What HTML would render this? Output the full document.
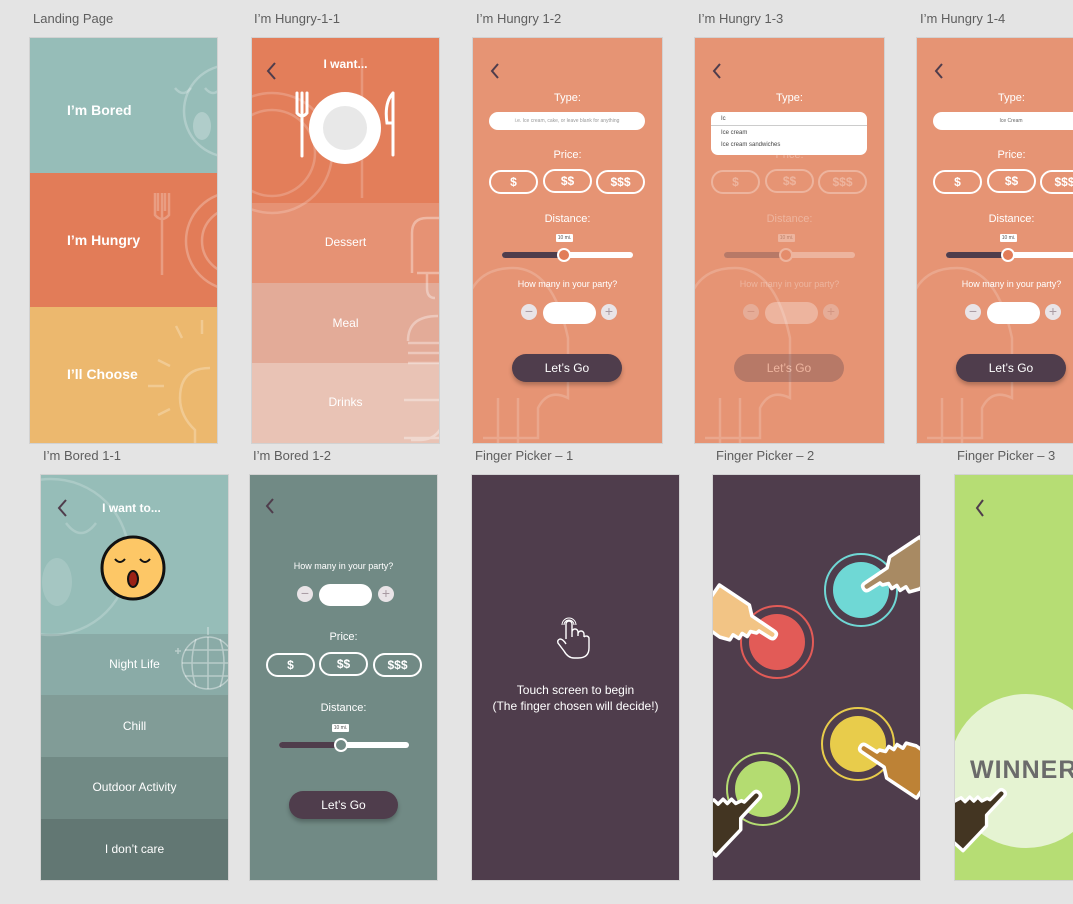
<!DOCTYPE html>
<html><head><meta charset="utf-8">
<style>
*{margin:0;padding:0;box-sizing:border-box}
body{width:1073px;height:904px;background:#e4e4e4;position:relative;overflow:hidden;font-family:"Liberation Sans",sans-serif}
.lbl{position:absolute;font-size:13px;color:#5e5e5e;white-space:nowrap}
.fr{position:absolute;overflow:hidden;outline:1px solid #d2d2d2}
.a{position:absolute}
.c{position:absolute;left:0;width:100%;text-align:center;color:#fff;white-space:nowrap}
.big{font-weight:bold;font-size:14px;color:#fff;position:absolute;white-space:nowrap}
.pill{position:absolute;border:2px solid #fff;border-radius:12px;color:#fff;font-weight:bold;font-size:12px;text-align:center;line-height:20px}
.wh{position:absolute;background:#fff;border-radius:11px}
.circ{position:absolute;width:16px;height:16px;border-radius:50%;background:#e9e4e7;color:#a89aa2;font-size:14px;line-height:15px;text-align:center}
.go{position:absolute;background:#4f3d4c;border-radius:14px;color:#fff;font-size:12px;text-align:center;line-height:28px;box-shadow:0 3px 4px rgba(0,0,0,.25)}
.tip{position:absolute;background:#fff;font-size:5px;color:#555;text-align:center;line-height:8px;border-radius:1px}
</style></head><body>

<div class="lbl" style="left:33px;top:11px">Landing Page</div>
<div class="lbl" style="left:254px;top:11px">I’m Hungry-1-1</div>
<div class="lbl" style="left:476px;top:11px">I’m Hungry 1-2</div>
<div class="lbl" style="left:698px;top:11px">I’m Hungry 1-3</div>
<div class="lbl" style="left:920px;top:11px">I’m Hungry 1-4</div>
<div class="lbl" style="left:43px;top:448px">I’m Bored 1-1</div>
<div class="lbl" style="left:253px;top:448px">I’m Bored 1-2</div>
<div class="lbl" style="left:475px;top:448px">Finger Picker – 1</div>
<div class="lbl" style="left:716px;top:448px">Finger Picker – 2</div>
<div class="lbl" style="left:957px;top:448px">Finger Picker – 3</div>

<!-- Landing -->
<div class="fr" style="left:30px;top:38px;width:187px;height:405px">
 <div class="a" style="left:0;top:0;width:187px;height:135px;background:#96bdb8"></div>
 <div class="a" style="left:0;top:135px;width:187px;height:134px;background:#e27c58"></div>
 <div class="a" style="left:0;top:269px;width:187px;height:136px;background:#ecb86e"></div>
 <svg class="a" style="left:0;top:0" width="187" height="405" fill="none" stroke="#fff" stroke-width="2.5" stroke-opacity=".25">
  <circle cx="200" cy="73" r="46"/><path d="M145 50q8 10 16 0M175 50q8 10 16 0"/><ellipse cx="172" cy="88" rx="9" ry="14" fill="#fff" fill-opacity=".25" stroke="none"/>
  <path d="M132 155v82M125 155v22q7 8 14 0v-22M128 155v18M135 155v18"/><circle cx="205" cy="203" r="49"/><circle cx="205" cy="203" r="33"/>
  <path d="M172 282v14M146 288l6 12M128 322l12 6M118 348h16M128 377l12-6"/><path d="M180 330q-30 0-30 30q0 18 15 32v18h30"/><path d="M157 412h40M160 422h40M162 432h40" />
 </svg>
 <div class="big" style="left:37px;top:64px">I’m Bored</div>
 <div class="big" style="left:37px;top:194px">I’m Hungry</div>
 <div class="big" style="left:37px;top:328px">I’ll Choose</div>
</div>

<!-- Hungry 1-1 -->
<div class="fr" style="left:252px;top:38px;width:187px;height:405px">
 <div class="a" style="left:0;top:0;width:187px;height:165px;background:#e37e5a"></div>
 <div class="a" style="left:0;top:165px;width:187px;height:80px;background:#e69274"></div>
 <div class="a" style="left:0;top:245px;width:187px;height:80px;background:#e3ab98"></div>
 <div class="a" style="left:0;top:325px;width:187px;height:80px;background:#e9c3b5"></div>
 <svg class="a" style="left:0;top:0" width="187" height="405" fill="none">
  <g stroke="#fff" stroke-opacity=".2" stroke-width="2.5"><circle cx="20" cy="115" r="60"/><circle cx="20" cy="115" r="43"/><path d="M110 20v140"/></g>
  <path d="M23 25l-7 8 7 8" stroke="#4f3d4c" stroke-width="2"/>
  <g stroke="#fff" stroke-width="3" stroke-linecap="round"><path d="M50 58v60M45 55v20q5 6 10 0v-20M50 55v18"/><path d="M141 55v62M141 55q-9 10-6 30h6"/></g>
  <circle cx="93" cy="90" r="36" fill="#fff"/><circle cx="93" cy="90" r="22" fill="#e8e8e8"/>
  <g stroke="#fff" stroke-opacity=".35" stroke-width="2.5"><path d="M160 235v-40q0-15 15-15h15M165 235h30M175 235v15q0 10 8 10"/><path d="M156 303q0-25 30-25M156 305h35M156 315h35M156 325h35"/><path d="M152 362h40v20q-5 20-25 20h-8M152 400h40"/></g>
 </svg>
 <div class="c" style="top:19px;font-size:12px;font-weight:bold">I want...</div>
 <div class="c" style="top:197px;font-size:12px">Dessert</div>
 <div class="c" style="top:278px;font-size:12px">Meal</div>
 <div class="c" style="top:357px;font-size:12px">Drinks</div>
</div>

<!-- Hungry 1-2 -->
<div class="fr" style="left:473px;top:38px;width:189px;height:405px;background:#e69474">
 <svg class="a" style="left:0;top:0" width="189" height="405" fill="none" stroke="#fff" stroke-opacity=".18" stroke-width="2.5"><path d="M-5 260q10-30 45-30q40 0 55 70v60q-20-10-30 10v30h-55M25 360v60h20v-60"/></svg>
 <svg class="a" style="left:16px;top:24px" width="12" height="18" fill="none"><path d="M9 2L3 9l6 7" stroke="#4f3d4c" stroke-width="2"/></svg>
 <div class="c" style="top:54px;font-size:11px">Type:</div>
 <div class="wh" style="left:16px;top:74px;width:156px;height:18px;border-radius:9px;font-size:5px;color:#999;text-align:center;line-height:18px">i.e. Ice cream, cake, or leave blank for anything</div>
 <div class="c" style="top:111px;font-size:11px">Price:</div>
 <div class="pill" style="left:16px;top:132px;width:49px;height:24px">$</div>
 <div class="pill" style="left:70px;top:131px;width:49px;height:24px">$$</div>
 <div class="pill" style="left:123px;top:132px;width:49px;height:24px">$$$</div>
 <div class="c" style="top:175px;font-size:11px">Distance:</div>
 <div class="tip" style="left:83px;top:196px;width:17px;height:8px">10 mi.</div>
 <div class="a" style="left:29px;top:214px;width:131px;height:6px;background:#fff;border-radius:3px"></div>
 <div class="a" style="left:29px;top:214px;width:62px;height:6px;background:#4f3d4c;border-radius:3px"></div>
 <div class="a" style="left:84px;top:210px;width:14px;height:14px;border-radius:50%;background:#e27c58;border:2px solid #fff"></div>
 <div class="c" style="top:241px;font-size:9px">How many in your party?</div>
 <div class="circ" style="left:48px;top:266px">−</div>
 <div class="wh" style="left:70px;top:264px;width:53px;height:22px"></div>
 <div class="circ" style="left:128px;top:266px">+</div>
 <div class="go" style="left:39px;top:316px;width:110px;height:28px">Let’s Go</div>
</div>

<!-- Hungry 1-3 -->
<div class="fr" style="left:695px;top:38px;width:189px;height:405px;background:#e69474">
 <svg class="a" style="left:0;top:0" width="189" height="405" fill="none" stroke="#fff" stroke-opacity=".18" stroke-width="2.5"><path d="M-5 260q10-30 45-30q40 0 55 70v60q-20-10-30 10v30h-55M25 360v60h20v-60"/></svg>
 <svg class="a" style="left:16px;top:24px" width="12" height="18" fill="none"><path d="M9 2L3 9l6 7" stroke="#4f3d4c" stroke-width="2"/></svg>
 <div class="c" style="top:54px;font-size:11px">Type:</div>
 <div style="opacity:.3">
 <div class="c" style="top:111px;font-size:11px">Price:</div>
 <div class="pill" style="left:16px;top:132px;width:49px;height:24px">$</div>
 <div class="pill" style="left:70px;top:131px;width:49px;height:24px">$$</div>
 <div class="pill" style="left:123px;top:132px;width:49px;height:24px">$$$</div>
 <div class="c" style="top:175px;font-size:11px">Distance:</div>
 <div class="tip" style="left:83px;top:196px;width:17px;height:8px">10 mi.</div>
 <div class="a" style="left:29px;top:214px;width:131px;height:6px;background:#fff;border-radius:3px"></div>
 <div class="a" style="left:29px;top:214px;width:62px;height:6px;background:#4f3d4c;border-radius:3px"></div>
 <div class="a" style="left:84px;top:210px;width:14px;height:14px;border-radius:50%;background:#e27c58;border:2px solid #fff"></div>
 <div class="c" style="top:241px;font-size:9px">How many in your party?</div>
 <div class="circ" style="left:48px;top:266px">−</div>
 <div class="wh" style="left:70px;top:264px;width:53px;height:22px"></div>
 <div class="circ" style="left:128px;top:266px">+</div>
 <div class="go" style="left:39px;top:316px;width:110px;height:28px;box-shadow:none">Let’s Go</div>
 </div>
 <div class="a" style="left:16px;top:74px;width:156px;height:43px;background:#fff;border-radius:7px;font-size:6px;color:#444">
  <div class="a" style="left:10px;top:4px">Ic</div>
  <div class="a" style="left:0;top:13px;width:156px;height:1px;background:#ccc"></div>
  <div class="a" style="left:10px;top:18px">Ice cream</div>
  <div class="a" style="left:10px;top:30px">Ice cream sandwiches</div>
 </div>
</div>

<!-- Hungry 1-4 -->
<div class="fr" style="left:917px;top:38px;width:189px;height:405px;background:#e69474">
 <svg class="a" style="left:0;top:0" width="189" height="405" fill="none" stroke="#fff" stroke-opacity=".18" stroke-width="2.5"><path d="M-5 260q10-30 45-30q40 0 55 70v60q-20-10-30 10v30h-55M25 360v60h20v-60"/></svg>
 <svg class="a" style="left:16px;top:24px" width="12" height="18" fill="none"><path d="M9 2L3 9l6 7" stroke="#4f3d4c" stroke-width="2"/></svg>
 <div class="c" style="top:54px;font-size:11px">Type:</div>
 <div class="wh" style="left:16px;top:74px;width:156px;height:18px;border-radius:9px;font-size:5px;color:#666;text-align:center;line-height:18px">Ice Cream</div>
 <div class="c" style="top:111px;font-size:11px">Price:</div>
 <div class="pill" style="left:16px;top:132px;width:49px;height:24px">$</div>
 <div class="pill" style="left:70px;top:131px;width:49px;height:24px">$$</div>
 <div class="pill" style="left:123px;top:132px;width:49px;height:24px">$$$</div>
 <div class="c" style="top:175px;font-size:11px">Distance:</div>
 <div class="tip" style="left:83px;top:196px;width:17px;height:8px">10 mi.</div>
 <div class="a" style="left:29px;top:214px;width:131px;height:6px;background:#fff;border-radius:3px"></div>
 <div class="a" style="left:29px;top:214px;width:62px;height:6px;background:#4f3d4c;border-radius:3px"></div>
 <div class="a" style="left:84px;top:210px;width:14px;height:14px;border-radius:50%;background:#e27c58;border:2px solid #fff"></div>
 <div class="c" style="top:241px;font-size:9px">How many in your party?</div>
 <div class="circ" style="left:48px;top:266px">−</div>
 <div class="wh" style="left:70px;top:264px;width:53px;height:22px"></div>
 <div class="circ" style="left:128px;top:266px">+</div>
 <div class="go" style="left:39px;top:316px;width:110px;height:28px">Let’s Go</div>
</div>

<!-- Bored 1-1 -->
<div class="fr" style="left:41px;top:475px;width:187px;height:405px">
 <div class="a" style="left:0;top:0;width:187px;height:159px;background:#96bdb8"></div>
 <div class="a" style="left:0;top:159px;width:187px;height:61px;background:#8aaba7"></div>
 <div class="a" style="left:0;top:220px;width:187px;height:62px;background:#819c97"></div>
 <div class="a" style="left:0;top:282px;width:187px;height:62px;background:#718a85"></div>
 <div class="a" style="left:0;top:344px;width:187px;height:61px;background:#627773"></div>
 <svg class="a" style="left:0;top:0" width="187" height="405" fill="none">
  <g stroke="#fff" stroke-opacity=".2" stroke-width="2.5"><circle cx="10" cy="82" r="78"/><path d="M25 48q15 20 30 0"/></g>
  <ellipse cx="16" cy="107" rx="15" ry="24" fill="#fff" fill-opacity=".15"/>
  <path d="M25 25l-7 8 7 8" stroke="#4f3d4c" stroke-width="2"/>
  <g stroke="#fff" stroke-opacity=".4" stroke-width="1.5"><circle cx="167" cy="188" r="26"/><path d="M167 160v-8M141 188h52M144 175h46M144 201h46M167 162v52M155 164q-8 24 0 48M179 164q8 24 0 48M137 173v6M134 176h6"/></g>
  <circle cx="92" cy="93" r="31" fill="#fdc766" stroke="#111" stroke-width="3"/>
  <path d="M74 84q5 6 10 0M99 84q5 6 10 0" stroke="#111" stroke-width="2"/>
  <ellipse cx="92" cy="104" rx="5" ry="8" fill="#9b2215" stroke="#111" stroke-width="2"/>
 </svg>
 <div class="c" style="top:26px;font-size:12px;font-weight:bold;left:-3px">I want to...</div>
 <div class="c" style="top:182px;font-size:12px">Night Life</div>
 <div class="c" style="top:244px;font-size:12px">Chill</div>
 <div class="c" style="top:305px;font-size:12px">Outdoor Activity</div>
 <div class="c" style="top:367px;font-size:12px">I don’t care</div>
</div>

<!-- Bored 1-2 -->
<div class="fr" style="left:250px;top:475px;width:187px;height:405px;background:#718a85">
 <svg class="a" style="left:14px;top:22px" width="12" height="18" fill="none"><path d="M9 2L3 9l6 7" stroke="#4f3d4c" stroke-width="2"/></svg>
 <div class="c" style="top:86px;font-size:9px">How many in your party?</div>
 <div class="circ" style="left:47px;top:111px">−</div>
 <div class="wh" style="left:69px;top:109px;width:53px;height:22px"></div>
 <div class="circ" style="left:128px;top:111px">+</div>
 <div class="c" style="top:156px;font-size:11px">Price:</div>
 <div class="pill" style="left:16px;top:178px;width:49px;height:24px">$</div>
 <div class="pill" style="left:69px;top:177px;width:49px;height:24px">$$</div>
 <div class="pill" style="left:123px;top:178px;width:49px;height:24px">$$$</div>
 <div class="c" style="top:227px;font-size:11px">Distance:</div>
 <div class="tip" style="left:82px;top:249px;width:17px;height:8px">10 mi.</div>
 <div class="a" style="left:29px;top:267px;width:130px;height:6px;background:#fff;border-radius:3px"></div>
 <div class="a" style="left:29px;top:267px;width:62px;height:6px;background:#4f3d4c;border-radius:3px"></div>
 <div class="a" style="left:84px;top:263px;width:14px;height:14px;border-radius:50%;background:#718a85;border:2px solid #fff"></div>
 <div class="go" style="left:39px;top:316px;width:109px;height:28px">Let’s Go</div>
</div>

<!-- Finger 1 -->
<div class="fr" style="left:472px;top:475px;width:207px;height:405px;background:#4f3d4c">
 <svg class="a" style="left:84px;top:140px" width="40" height="46" fill="none" stroke="#fff" stroke-width="1.4">
  <path d="M10 24V9a3 3 0 0 1 6 0v13M16 17a3 3 0 0 1 6 0v4M22 19a3 3 0 0 1 6 0v3M28 22a3 3 0 0 1 5 1v10q0 10-11 10h-4q-6 0-10-7l-6-8q-1-3 2-4q3 0 6 5"/>
  <path d="M8 10a5 5 0 0 1 10 0M6 10a7 7 0 0 1 14 0" stroke-width="1"/>
 </svg>
 <div class="c" style="top:208px;font-size:12px">Touch screen to begin</div>
 <div class="c" style="top:224px;font-size:12px">(The finger chosen will decide!)</div>
</div>

<!-- Finger 2 -->
<div class="fr" style="left:713px;top:475px;width:207px;height:405px;background:#4f3d4c">
 <svg class="a" style="left:0;top:0" width="207" height="405">
  <defs><path id="h" d="M3 0 Q3 -4 -1 -4 L-28 -5 L-36 -13 L-72 -14 L-74 28 L-44 30 L-34 27 L-34 21 L-27 21 L-27 15 L-21 15 L-21 9 L-15 7 L-14 4 L-1 4 Q3 4 3 0 Z"/></defs>
  <g fill="none" stroke-width="2"><circle cx="64" cy="167" r="36" stroke="#e25b57"/><circle cx="148" cy="115" r="36" stroke="#6fd8d5"/><circle cx="145" cy="269" r="36" stroke="#e8cc4b"/><circle cx="50" cy="314" r="36" stroke="#b4dc71"/></g>
  <circle cx="64" cy="167" r="28" fill="#e25b57"/><circle cx="148" cy="115" r="28" fill="#6fd8d5"/><circle cx="145" cy="269" r="28" fill="#e8cc4b"/><circle cx="50" cy="314" r="28" fill="#b4dc71"/>
  <g stroke="#fff" stroke-width="3.5" stroke-linejoin="round">
   <use href="#h" transform="translate(60 160) rotate(32)" fill="#f2c485"/>
   <use href="#h" transform="translate(153 112) rotate(148) scale(1 -1)" fill="#a88a63"/>
   <use href="#h" transform="translate(150 273) rotate(-148)" fill="#bd8236"/>
   <use href="#h" transform="translate(44 320) rotate(-45) scale(1 -1)" fill="#433522"/>
  </g>
 </svg>
</div>

<!-- Finger 3 -->
<div class="fr" style="left:955px;top:475px;width:130px;height:405px;background:#b6dd74">
 <svg class="a" style="left:0;top:0" width="130" height="405">
  <circle cx="71" cy="296" r="77" fill="#e5f3d2"/>
  <path d="M28 25l-6 8 6 8" stroke="#4f3d4c" stroke-width="2" fill="none"/>
  <use href="#h" transform="translate(47 318) rotate(-45) scale(0.95 -0.95)" fill="#433522" stroke="#fff" stroke-width="3.5" stroke-linejoin="round"/>
 </svg>
 <div class="a" style="left:15px;top:281px;font-size:25px;font-weight:bold;color:#6b6b6b;letter-spacing:1px">WINNER</div>
</div>

</body></html>
